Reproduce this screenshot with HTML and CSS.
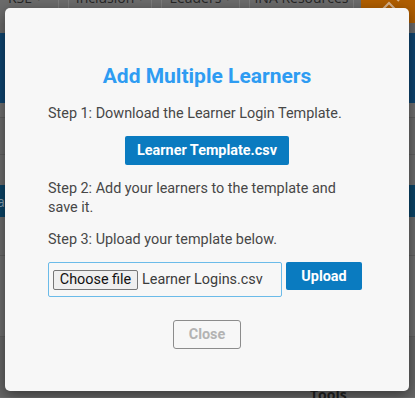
FILE: index.html
```html
<!DOCTYPE html>
<html lang="en">
<head>
<meta charset="utf-8">
<title>Add Multiple Learners</title>
<link rel="stylesheet" href="styles.css">
</head>
<body>
<div class="page">
  <nav class="topnav">
    <div class="tab tab-kse">KSE <span class="caret">▾</span></div>
    <div class="tab tab-inc">Inclusion <span class="caret">▾</span></div>
    <div class="tab tab-lead">Leaders <span class="caret">▾</span></div>
    <div class="tab tab-ina">INA Resources</div>
    <div class="tab-edit">
      <svg width="55" height="23" viewBox="0 0 55 23">
        <g fill="none" stroke="#d8b48e" stroke-width="2">
          <path d="M17 14 L28 3 L33 8 L22 19 L16 20 Z"/>
          <path d="M35 -2 L38 1"/>
        </g>
      </svg>
    </div>
  </nav>
  <div class="navgap"></div>
  <header class="hero"></header>
  <div class="row row-a"></div>
  <div class="row row-b"></div>
  <div class="row-gap"></div>
  <div class="band"><span class="band-text">a</span></div>
  <div class="row row-c"></div>
  <div class="row row-d"></div>
  <div class="row-e"><span class="tools">Tools</span></div>
</div>

<div class="modal">
  <h2 class="modal-title">Add Multiple Learners</h2>
  <p class="step step-1">Step 1: Download the Learner Login Template.</p>
  <div class="center">
    <button class="btn btn-primary btn-template">Learner Template.csv</button>
  </div>
  <p class="step step-2">Step 2: Add your learners to the template and save it.</p>
  <p class="step step-3">Step 3: Upload your template below.</p>
  <div class="upload-row">
    <label class="file-box">
      <span class="file-btn">Choose file</span>
      <span class="file-name">Learner Logins.csv</span>
    </label>
    <button class="btn btn-primary btn-upload">Upload</button>
  </div>
  <div class="center">
    <button class="btn btn-close">Close</button>
  </div>
</div>
</body>
</html>
```
FILE: styles.css
```css
html, body {
  margin: 0;
  padding: 0;
}
body {
  width: 415px;
  height: 398px;
  overflow: hidden;
  background: #6e6e6e;
  font-family: Roboto, "Liberation Sans", sans-serif;
  position: relative;
}

/* ---------- dimmed page behind the modal ---------- */
.page {
  display: flex;
  flex-direction: column;
}
.topnav {
  display: flex;
  height: 23px;
  background: #6b6b6b;
  font-family: "Open Sans", "Liberation Sans", sans-serif;
  font-size: 14px;
  color: #262626;
}
.tab {
  box-sizing: border-box;
  line-height: 1;
  border-left: 1px solid #7c7c7c;
  border-right: 1px solid #7c7c7c;
  margin-right: 9px;
  overflow: hidden;
  white-space: nowrap;
  display: flex;
  align-items: flex-start;
  justify-content: center;
  margin-top: -9px;
  height: 32px;
}
.tab-kse { width: 59px; border-left: none; padding-left: 8px; justify-content: flex-start; }
.tab-inc { width: 84px; }
.tab-lead { width: 79px; }
.tab-ina { width: 105px; margin-right: 7px; }
.caret { font-size: 11px; color: #3a3a3a; margin-left: 4px; }
.tab-edit {
  flex: 1;
  height: 23px;
  background: #b05e00;
  overflow: hidden;
}
.tab-edit svg { display: block; }
.navgap {
  height: 10px;
  background: #6a6a6a;
}
.hero {
  height: 70px;
  background: #0e4570;
}
.row {
  border-bottom: 1px solid #5f5f5f;
}
.row-a { height: 14px; background: #6f6f6f; }
.row-b { height: 36px; background: #6b6b6b; }
.row-gap { height: 30px; background: #6c6c6c; }
.band {
  height: 32px;
  background: #0b4467;
  display: flex;
  align-items: center;
}
.band-text {
  font-family: "Open Sans", "Liberation Sans", sans-serif;
  font-size: 14px;
  color: #8ea3b3;
  margin-left: -3px;
}
.row-c { height: 38px; background: #6c6c6c; }
.row-d { height: 80px; background: #6e6e6e; }
.row-e {
  height: 60px;
  background: #666666;
  position: relative;
}
.tools {
  position: absolute;
  left: 310px;
  top: 50px;
  font-family: "Open Sans", "Liberation Sans", sans-serif;
  font-weight: 700;
  font-size: 14px;
  line-height: 16px;
  color: #1f1f1f;
}

/* ---------- modal ---------- */
.modal {
  position: absolute;
  top: 8px;
  left: 5px;
  width: 404px;
  height: 383px;
  box-sizing: border-box;
  padding: 0 43px;
  background: #f7f7f7;
  border-radius: 5px;
  box-shadow: 0 4px 14px rgba(0, 0, 0, 0.45);
  display: flex;
  flex-direction: column;
  color: #454545;
}
.modal-title {
  margin: 56px 0 0;
  font-size: 21px;
  line-height: 24px;
  font-weight: 700;
  text-align: center;
  color: #2e9cf2;
}
.step {
  margin: 0;
  font-size: 14.4px;
  line-height: 19px;
  color: #474747;
  max-width: 305px;
}
.step-1 { margin-top: 16px; }
.step-2 { margin-top: 14px; }
.step-3 { margin-top: 13px; }
.center {
  display: flex;
  justify-content: center;
}
.btn {
  font-family: Roboto, "Liberation Sans", sans-serif;
  font-size: 14.4px;
  font-weight: 700;
  border-radius: 2px;
  cursor: pointer;
  box-sizing: border-box;
  padding: 0;
}
.btn-primary {
  background: #0a7bc0;
  color: #ffffff;
  border: none;
}
.btn-template {
  margin-top: 13px;
  width: 164px;
  height: 29px;
}
.upload-row {
  display: flex;
  align-items: flex-start;
  gap: 4px;
  margin-top: 13px;
}
.file-box {
  box-sizing: border-box;
  width: 234px;
  height: 35px;
  border: 1px solid #6bbbe9;
  border-radius: 2px;
  display: flex;
  align-items: center;
  padding-left: 4px;
  gap: 4px;
  font-size: 14.4px;
  color: #3a3a3a;
}
.file-btn {
  box-sizing: border-box;
  height: 20px;
  width: 85px;
  border: 1px solid #767676;
  border-radius: 2px;
  background: #efefef;
  color: #111;
  display: flex;
  align-items: center;
  justify-content: center;
}
.file-name { color: #3c3c3c; }
.btn-upload {
  width: 76px;
  height: 28px;
}
.btn-close {
  margin-top: 23px;
  width: 68px;
  height: 29px;
  background: #f7f7f7;
  border: 1px solid #8c8c8c;
  border-radius: 3px;
  color: #b3b3b3;
}
```
